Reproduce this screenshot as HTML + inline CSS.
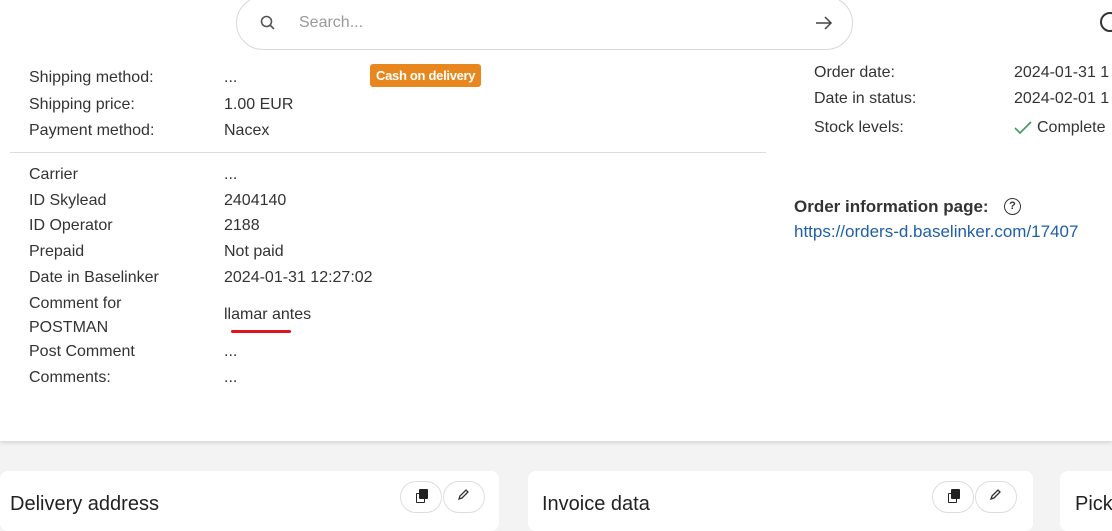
<!DOCTYPE html>
<html><head><style>
body{margin:0;width:1112px;height:526px;overflow:hidden;background:#f3f3f4;font-family:"Liberation Sans",sans-serif;color:#333;font-size:16px;position:relative}
.a{position:absolute;white-space:nowrap;line-height:20px}
.card{position:absolute;background:#fff}
.l{left:29px}.v{left:224px}
.btn{position:absolute;width:40px;height:30px;border:1px solid #ddd;border-radius:16px;background:#fff}
</style></head><body>
<div class="card" style="left:0;top:0;width:1112px;height:441px;box-shadow:0 2px 4px rgba(0,0,0,.12)"></div>
<div class="a" style="left:236px;top:-4px;width:615px;height:52px;border:1px solid #d8d8d8;border-radius:28px;background:#fff"></div>
<svg class="a" style="left:259px;top:14px" width="18" height="18" viewBox="0 0 18 18"><circle cx="7.5" cy="7.5" r="5" fill="none" stroke="#555" stroke-width="1.6"/><path d="M11 11l4 4" stroke="#555" stroke-width="1.6"/></svg>
<div class="a" style="left:299px;top:13px;color:#999">Search...</div>
<svg class="a" style="left:814px;top:15px" width="20" height="16" viewBox="0 0 20 16"><path d="M2 8h15M11 2l6 6-6 6" fill="none" stroke="#444" stroke-width="1.5"/></svg>
<div class="a" style="left:1100px;top:12px;width:20px;height:20px;border:2px solid #333;border-radius:50%;box-sizing:border-box"></div>
<div class="a" style="left:370px;top:64px;background:#e8871e;color:#fff;font-weight:bold;font-size:13px;padding:2px 6px;border-radius:3px;line-height:19px;letter-spacing:-0.3px">Cash on delivery</div>
<div class="a l" style="top:68px">Shipping method:</div><div class="a v" style="top:68px">...</div>
<div class="a l" style="top:95px">Shipping price:</div><div class="a v" style="top:95px">1.00 EUR</div>
<div class="a l" style="top:121px">Payment method:</div><div class="a v" style="top:121px">Nacex</div>
<div class="a" style="left:10px;top:152px;width:756px;height:1px;background:#ddd"></div>
<div class="a l" style="top:165px">Carrier</div><div class="a v" style="top:165px">...</div>
<div class="a l" style="top:191px">ID Skylead</div><div class="a v" style="top:191px">2404140</div>
<div class="a l" style="top:216px">ID Operator</div><div class="a v" style="top:216px">2188</div>
<div class="a l" style="top:242px">Prepaid</div><div class="a v" style="top:242px">Not paid</div>
<div class="a l" style="top:268px">Date in Baselinker</div><div class="a v" style="top:268px">2024-01-31 12:27:02</div>
<div class="a l" style="top:292px;line-height:24px">Comment for<br>POSTMAN</div><div class="a v" style="top:305px">llamar antes</div>
<div class="a" style="left:231px;top:330px;width:60px;height:3px;background:#e0141e;border-radius:2px"></div>
<div class="a l" style="top:342px">Post Comment</div><div class="a v" style="top:342px">...</div>
<div class="a l" style="top:368px">Comments:</div><div class="a v" style="top:368px">...</div>
<div class="a" style="left:814px;top:63px">Order date:</div><div class="a" style="left:1014px;top:63px">2024-01-31 1</div>
<div class="a" style="left:814px;top:89px">Date in status:</div><div class="a" style="left:1014px;top:89px">2024-02-01 1</div>
<div class="a" style="left:814px;top:118px">Stock levels:</div>
<svg class="a" style="left:1013px;top:120px" width="20" height="16" viewBox="0 0 20 16"><path d="M2 8l5 5 11-11" fill="none" stroke="#3a9a5a" stroke-width="1.6"/></svg>
<div class="a" style="left:1037px;top:118px">Complete</div>
<div class="a" style="left:794px;top:197px;font-weight:bold;font-size:17px">Order information page:</div>
<div class="a" style="left:1004px;top:198px;width:17px;height:17px;border:1.5px solid #333;border-radius:50%;box-sizing:border-box;font-size:11px;text-align:center;line-height:14px;font-weight:bold">?</div>
<div class="a" style="left:794px;top:222px;color:#1f5fa8;font-size:17px">https://orders-d.baselinker.com/17407</div>
<div class="card" style="left:0;top:471px;width:499px;height:60px;border-radius:8px"></div>
<div class="card" style="left:528px;top:471px;width:505px;height:60px;border-radius:8px"></div>
<div class="card" style="left:1060px;top:471px;width:60px;height:60px;border-radius:8px"></div>
<div class="a" style="left:10px;top:492px;font-size:20px;line-height:24px;color:#222">Delivery address</div>
<div class="a" style="left:542px;top:492px;font-size:20px;line-height:24px;color:#222">Invoice data</div>
<div class="a" style="left:1075px;top:492px;font-size:20px;line-height:24px;color:#222">Pick</div>
<div class="btn" style="left:400px;top:481px"></div><div class="btn" style="left:443px;top:481px"></div>
<div class="btn" style="left:932px;top:481px"></div><div class="btn" style="left:975px;top:481px"></div>
<div class="a" style="left:416px;top:493px;width:7px;height:8px;border:1.3px solid #222;border-radius:1px"></div>
<div class="a" style="left:419px;top:489px;width:9px;height:10px;background:#222;border-radius:1px"></div>
<div class="a" style="left:948px;top:493px;width:7px;height:8px;border:1.3px solid #222;border-radius:1px"></div>
<div class="a" style="left:951px;top:489px;width:9px;height:10px;background:#222;border-radius:1px"></div>
<svg class="a" style="left:456px;top:488px" width="14" height="14" viewBox="0 0 14 14"><path d="M3 11l1-3 6-6 2 2-6 6z" fill="none" stroke="#333" stroke-width="1.3"/></svg>
<svg class="a" style="left:988px;top:488px" width="14" height="14" viewBox="0 0 14 14"><path d="M3 11l1-3 6-6 2 2-6 6z" fill="none" stroke="#333" stroke-width="1.3"/></svg>
</body></html>
